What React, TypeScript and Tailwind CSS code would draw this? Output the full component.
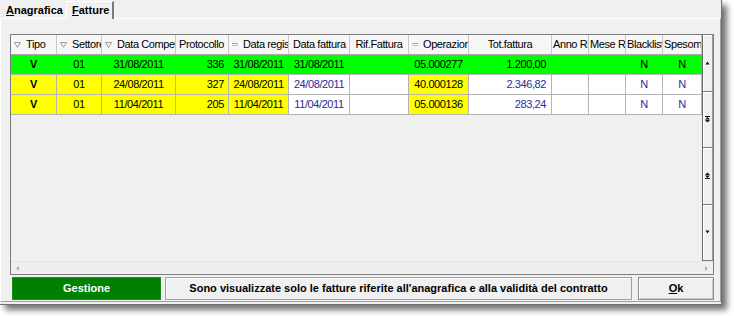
import React from 'react';

type Col = { w: string; label: string; icon?: 'tri' | 'eq'; head: string };

const cols: Col[] = [
  { w: 'w-[46px]', label: 'Tipo', icon: 'tri', head: 'justify-start pl-[3px]' },
  { w: 'w-[45px]', label: 'Settore', icon: 'tri', head: 'justify-start pl-[3px]' },
  { w: 'w-[74px]', label: 'Data Competenza', icon: 'tri', head: 'justify-start pl-[3px]' },
  { w: 'w-[53px]', label: 'Protocollo', head: 'justify-start pl-[3px]' },
  { w: 'w-[60px]', label: 'Data registrazione', icon: 'eq', head: 'justify-start pl-[3px]' },
  { w: 'w-[61px]', label: 'Data fattura', head: 'justify-start pl-[4px]' },
  { w: 'w-[59px]', label: 'Rif.Fattura', head: 'justify-center' },
  { w: 'w-[60px]', label: 'Operazione', icon: 'eq', head: 'justify-start pl-[3px]' },
  { w: 'w-[83px]', label: 'Tot.fattura', head: 'justify-center' },
  { w: 'w-[37px]', label: 'Anno Rif', head: 'justify-start pl-[1px]' },
  { w: 'w-[37px]', label: 'Mese Rif', head: 'justify-start pl-[1px]' },
  { w: 'w-[37px]', label: 'Blacklist', head: 'justify-start pl-[1px]' },
  { w: 'w-[39px]', label: 'Spesometro', head: 'justify-start pl-[1px]' },
];

const align = [
  'justify-center font-bold',
  'justify-center',
  'justify-center',
  'justify-end pr-[4px]',
  'justify-center',
  'justify-center',
  'justify-center',
  'justify-center',
  'justify-end pr-[5px]',
  'justify-center',
  'justify-center',
  'justify-center',
  'justify-center',
];

type Row = { green: boolean; cells: string[] };
const rows: Row[] = [
  { green: true, cells: ['V', '01', '31/08/2011', '336', '31/08/2011', '31/08/2011', '', '05.000277', '1.200,00', '', '', 'N', 'N'] },
  { green: false, cells: ['V', '01', '24/08/2011', '327', '24/08/2011', '24/08/2011', '', '40.000128', '2.346,82', '', '', 'N', 'N'] },
  { green: false, cells: ['V', '01', '11/04/2011', '205', '11/04/2011', '11/04/2011', '', '05.000136', '283,24', '', '', 'N', 'N'] },
];

const yellowCols = [0, 1, 2, 3, 4, 7];
const blueCols = [5, 8, 11, 12];

function TriIcon() {
  return (
    <svg width="7" height="6" viewBox="0 0 7 6" className="shrink-0 mr-[5px]">
      <path d="M0.5 0.5 H6.5 L3.5 5.5 Z" fill="none" stroke="#9a9a9a" strokeWidth="1" />
    </svg>
  );
}

function EqIcon() {
  return (
    <svg width="7" height="5" viewBox="0 0 7 5" className="shrink-0 mr-[4px]">
      <rect x="0" y="1" width="6" height="1" fill="#a8a8a8" />
      <rect x="0" y="3" width="6" height="1" fill="#c0c0c0" />
    </svg>
  );
}

function Arrow({ kind }: { kind: 'up' | 'pgup' | 'pgdn' | 'down' }) {
  if (kind === 'up')
    return (
      <svg width="5" height="4" viewBox="0 0 5 4">
        <path d="M2.5 0.5 L4.5 3.5 H0.5 Z" fill="#111" />
      </svg>
    );
  if (kind === 'down')
    return (
      <svg width="5" height="4" viewBox="0 0 5 4">
        <path d="M0.5 0.5 H4.5 L2.5 3.5 Z" fill="#111" />
      </svg>
    );
  if (kind === 'pgup')
    return (
      <svg width="5" height="7" viewBox="0 0 5 7">
        <rect x="0" y="0" width="5" height="1" fill="#111" />
        <path d="M2.5 1 L5 3.5 H0 Z" fill="#111" />
        <path d="M0 4 H5 L2.5 6.5 Z" fill="#111" />
      </svg>
    );
  return (
    <svg width="5" height="7" viewBox="0 0 5 7">
      <path d="M2.5 0.5 L5 3 H0 Z" fill="#111" />
      <path d="M0 3.5 H5 L2.5 6 Z" fill="#111" />
      <rect x="0" y="6" width="5" height="1" fill="#111" />
    </svg>
  );
}

export default function App() {
  const font = '[font-family:"Liberation_Sans_Narrow","Liberation_Sans",Arial,sans-serif]';
  return (
    <div className={`w-[734px] h-[316px] bg-white overflow-hidden text-[11px] text-black ${font}`}>
      <div className="w-[722px] h-[305px] bg-[#f0f0f0] border-r border-b border-[#6e6e6e] shadow-[5px_5px_6px_rgba(0,0,0,0.55)] flex flex-col">
        {/* Tabs */}
        <div className="h-[18px] flex items-end pl-[2px] shrink-0">
          <div className="h-[16px] w-[64px] pl-[4px] flex items-center font-bold">
            <span><span className="underline">A</span>nagrafica</span>
          </div>
          <div className="h-[18px] w-[48px] pl-[5px] flex items-center font-bold border-l border-t border-white border-r-2 border-r-[#7a7a7a] bg-[#f0f0f0] -mb-[1px] relative">
            <span><span className="underline">F</span>atture</span>
          </div>
        </div>
        {/* Panel */}
        <div className="h-[284px] border-t border-l border-white border-r border-b border-r-[#a0a0a0] border-b-[#a0a0a0] pt-[15px] pl-[9px] flex flex-col">
          {/* Grid */}
          <div className="w-[704px] h-[241px] border border-[#7c7c7c] flex flex-col bg-[#f0f0f0] tracking-[-0.4px]">
            <div className="flex h-[226px]">
              <div className="w-[691px] flex flex-col">
                {/* Header */}
                <div className="flex h-[20px] border-b border-[#a8a8a8] bg-[#f7f7f7]">
                  {cols.map((c, i) => (
                    <div
                      key={i}
                      className={`${c.w} h-full shrink-0 flex items-center overflow-hidden whitespace-nowrap border-r border-[#c8c8c8] ${c.head}`}
                    >
                      {c.icon === 'tri' && <TriIcon />}
                      {c.icon === 'eq' && <EqIcon />}
                      <span>{c.label}</span>
                    </div>
                  ))}
                </div>
                {/* Rows */}
                {rows.map((r, ri) => (
                  <div key={ri} className={`flex h-[20px] border-b border-[#b4b4b4] ${r.green ? 'bg-[#00ff00]' : 'bg-white'}`}>
                    {r.cells.map((t, ci) => {
                      const bg = r.green ? 'bg-[#00ff00] border-[#00ff00]' : yellowCols.includes(ci) ? 'bg-[#ffff00] border-[#b4b4b4]' : 'bg-white border-[#b4b4b4]';
                      const color = !r.green && blueCols.includes(ci) ? 'text-[#2a2a9e]' : 'text-black';
                      return (
                        <div
                          key={ci}
                          className={`${cols[ci].w} h-full shrink-0 flex items-center overflow-hidden whitespace-nowrap border-r ${bg} ${color} ${align[ci]}`}
                        >
                          {t}
                        </div>
                      );
                    })}
                  </div>
                ))}
                <div className="flex-1" />
              </div>
              {/* Vertical navigator */}
              <div className="w-[11px] flex flex-col border-l border-[#6a6a6a] bg-[#f0f0f0]">
                {(['up', 'pgup', 'pgdn', 'down'] as const).map((k) => (
                  <div key={k} className="flex-1 flex items-center justify-center border-b border-[#7a7a7a] border-r border-r-[#9a9a9a] shadow-[inset_1px_1px_0_#ffffff]">
                    <Arrow kind={k} />
                  </div>
                ))}
              </div>
            </div>
            {/* Horizontal scrollbar */}
            <div className="flex-1 flex items-center justify-between px-[5px] border-t border-[#e4e4e4] bg-[#efefef]">
              <svg width="3" height="5" viewBox="0 0 3 5">
                <path d="M3 0 V5 L0 2.5 Z" fill="#b0b0b0" />
              </svg>
              <svg width="3" height="5" viewBox="0 0 3 5">
                <path d="M0 0 V5 L3 2.5 Z" fill="#b0b0b0" />
              </svg>
            </div>
          </div>
          {/* Buttons */}
          <div className="flex mt-[2px] ml-[2px] h-[23px] items-stretch">
            <div className="w-[149px] bg-[#008000] border border-[#1d8a1d] flex items-center justify-center text-white font-bold">
              Gestione
            </div>
            <div className="w-[467px] ml-[4px] border border-[#a0a0a0] shadow-[inset_1px_1px_0_#ffffff] flex items-center justify-center font-bold">
              Sono visualizzate solo le fatture riferite all'anagrafica e alla validità del contratto
            </div>
            <div className="w-[76px] ml-[6px] border border-[#8c8c8c] shadow-[inset_1px_1px_0_#ffffff,inset_-1px_-1px_0_#c8c8c8] flex items-center justify-center font-bold">
              <span><span className="underline">O</span>k</span>
            </div>
          </div>
        </div>
      </div>
    </div>
  );
}
